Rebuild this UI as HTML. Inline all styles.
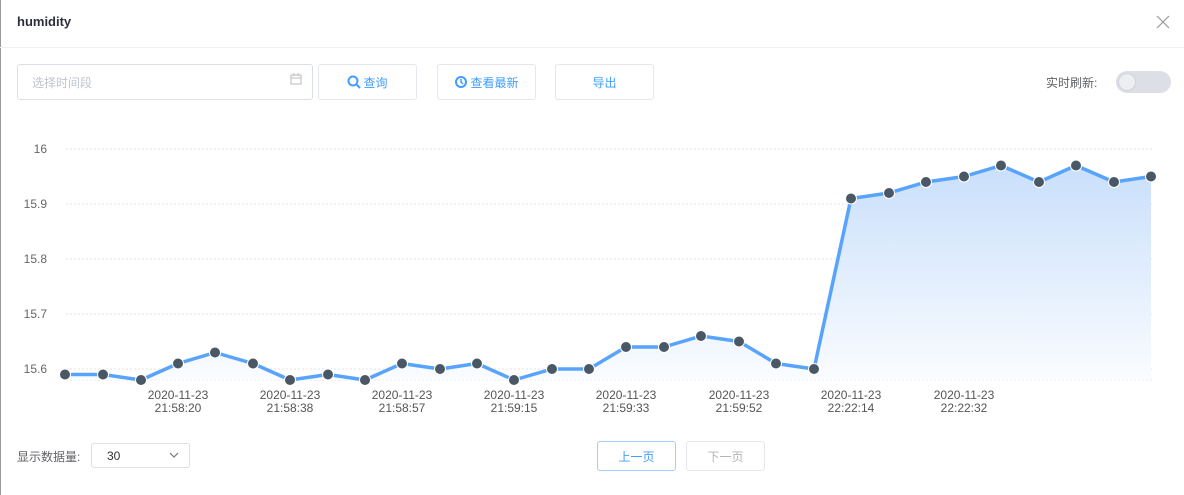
<!DOCTYPE html>
<html><head><meta charset="utf-8"><style>
body{margin:0;width:1184px;height:495px;background:#fff;font-family:"Liberation Sans","Noto Sans CJK SC",sans-serif;position:relative;overflow:hidden}
.a{position:absolute}
.btn{position:absolute;border:1px solid #e4e7ed;border-radius:3px;color:#409eff;font-size:12px;display:flex;align-items:center;justify-content:center;box-sizing:border-box;height:36px;top:64px}
</style></head><body>
<div class="a" style="left:0;top:0;width:1px;height:495px;background:#999"></div>
<div class="a" style="left:17px;top:14px;font-size:13px;font-weight:bold;color:#2b2f3a">humidity</div>
<svg class="a" style="left:1156px;top:15px" width="14" height="14"><path d="M1 1L13 13M13 1L1 13" stroke="#999" stroke-width="1.2"/></svg>
<div class="a" style="left:0;top:47px;width:1184px;height:1px;background:#eef0f3"></div>
<div class="a" style="left:17px;top:64px;width:296px;height:36px;border:1px solid #dcdfe6;border-radius:3px;box-sizing:border-box"></div>
<div class="a" style="left:32px;top:74px;font-size:12px;color:#c0c4cc">选择时间段</div>
<svg class="a" style="left:290px;top:73px" width="12" height="12"><rect x="1" y="2" width="10" height="9" fill="none" stroke="#bbb"/><path d="M1 5H11M4 0V3M8 0V3" stroke="#bbb"/></svg>
<div class="btn" style="left:318px;width:99px"><svg width="14" height="14" style="margin-right:2px"><circle cx="6" cy="6" r="4.5" fill="none" stroke="#409eff" stroke-width="2"/><path d="M9.5 9.5L13 13" stroke="#409eff" stroke-width="2"/></svg>查询</div>
<div class="btn" style="left:437px;width:99px"><svg width="14" height="14" style="margin-right:2px"><circle cx="7" cy="7" r="5" fill="none" stroke="#409eff" stroke-width="2"/><path d="M7 4V7L9 9" stroke="#409eff" stroke-width="1.5" fill="none"/></svg>查看最新</div>
<div class="btn" style="left:555px;width:99px">导出</div>
<div class="a" style="left:1046px;top:74px;font-size:12px;color:#606266">实时刷新:</div>
<div class="a" style="left:1116px;top:71px;width:55px;height:22px;border-radius:11px;background:#dcdfe6"></div>
<div class="a" style="left:1118px;top:73px;width:18px;height:18px;border-radius:9px;background:#eceef1;border:1px solid #cfd2d7;box-sizing:border-box"></div>
<svg class="a" style="left:0;top:0" width="1184" height="495">
<defs><linearGradient id="g" x1="0" y1="0" x2="0" y2="1"><stop offset="0" stop-color="#c9dffb"/><stop offset="1" stop-color="#fafcff"/></linearGradient></defs>
<g font-size="12" fill="#666" text-anchor="end">
<text x="47" y="153">16</text><text x="47" y="208">15.9</text><text x="47" y="263">15.8</text><text x="47" y="318">15.7</text><text x="47" y="373">15.6</text></g>
<g stroke="#e3e3e3" stroke-dasharray="2,2"><path d="M66 149H1152M66 204H1152M66 259H1152M66 314H1152M66 369H1152M66 380H1152"/></g>
<polygon fill="url(#g)" points="65,380 65,374.5 103,374.5 141,380 178,363.5 215,352.5 253,363.5 290,380 328,374.5 365,380 402,363.5 440,369 477,363.5 514,380 552,369 589,369 626,347 664,347 701,336 739,341.5 776,363.5 814,369 851,198.5 889,193 926,182 964,176.5 1001,165.5 1039,182 1076,165.5 1114,182 1151,176.5 1151,380"/>
<polyline fill="none" stroke="#58a3fb" stroke-width="3.5" stroke-linejoin="round" points="65,374.5 103,374.5 141,380 178,363.5 215,352.5 253,363.5 290,380 328,374.5 365,380 402,363.5 440,369 477,363.5 514,380 552,369 589,369 626,347 664,347 701,336 739,341.5 776,363.5 814,369 851,198.5 889,193 926,182 964,176.5 1001,165.5 1039,182 1076,165.5 1114,182 1151,176.5"/>
<g fill="#4a5866" stroke="#fff" stroke-width="1">
<circle cx="65" cy="374.5" r="5.5"/><circle cx="103" cy="374.5" r="5.5"/><circle cx="141" cy="380" r="5.5"/><circle cx="178" cy="363.5" r="5.5"/><circle cx="215" cy="352.5" r="5.5"/><circle cx="253" cy="363.5" r="5.5"/><circle cx="290" cy="380" r="5.5"/><circle cx="328" cy="374.5" r="5.5"/><circle cx="365" cy="380" r="5.5"/><circle cx="402" cy="363.5" r="5.5"/><circle cx="440" cy="369" r="5.5"/><circle cx="477" cy="363.5" r="5.5"/><circle cx="514" cy="380" r="5.5"/><circle cx="552" cy="369" r="5.5"/><circle cx="589" cy="369" r="5.5"/><circle cx="626" cy="347" r="5.5"/><circle cx="664" cy="347" r="5.5"/><circle cx="701" cy="336" r="5.5"/><circle cx="739" cy="341.5" r="5.5"/><circle cx="776" cy="363.5" r="5.5"/><circle cx="814" cy="369" r="5.5"/><circle cx="851" cy="198.5" r="5.5"/><circle cx="889" cy="193" r="5.5"/><circle cx="926" cy="182" r="5.5"/><circle cx="964" cy="176.5" r="5.5"/><circle cx="1001" cy="165.5" r="5.5"/><circle cx="1039" cy="182" r="5.5"/><circle cx="1076" cy="165.5" r="5.5"/><circle cx="1114" cy="182" r="5.5"/><circle cx="1151" cy="176.5" r="5.5"/></g>
<g font-size="12" fill="#555" text-anchor="middle">
<text x="178" y="399">2020-11-23</text><text x="178" y="412">21:58:20</text>
<text x="290" y="399">2020-11-23</text><text x="290" y="412">21:58:38</text>
<text x="402" y="399">2020-11-23</text><text x="402" y="412">21:58:57</text>
<text x="514" y="399">2020-11-23</text><text x="514" y="412">21:59:15</text>
<text x="626" y="399">2020-11-23</text><text x="626" y="412">21:59:33</text>
<text x="739" y="399">2020-11-23</text><text x="739" y="412">21:59:52</text>
<text x="851" y="399">2020-11-23</text><text x="851" y="412">22:22:14</text>
<text x="964" y="399">2020-11-23</text><text x="964" y="412">22:22:32</text></g>
</svg>
<div class="a" style="left:17px;top:448px;font-size:12px;color:#606266">显示数据量:</div>
<div class="a" style="left:91px;top:443px;width:99px;height:25px;border:1px solid #dcdfe6;border-radius:3px;box-sizing:border-box;font-size:12px;color:#333;padding:5px 0 0 15px">30</div>
<svg class="a" style="left:169px;top:452px" width="10" height="7"><path d="M1 1L5 5L9 1" fill="none" stroke="#777" stroke-width="1.2"/></svg>
<div class="a" style="left:597px;top:441px;width:79px;height:30px;border:1px solid #a0cfff;border-radius:3px;box-sizing:border-box;color:#409eff;font-size:12px;display:flex;align-items:center;justify-content:center">上一页</div>
<div class="a" style="left:686px;top:441px;width:79px;height:30px;border:1px solid #e4e7ed;border-radius:3px;box-sizing:border-box;color:#b0b3b8;font-size:12px;display:flex;align-items:center;justify-content:center">下一页</div>
</body></html>
